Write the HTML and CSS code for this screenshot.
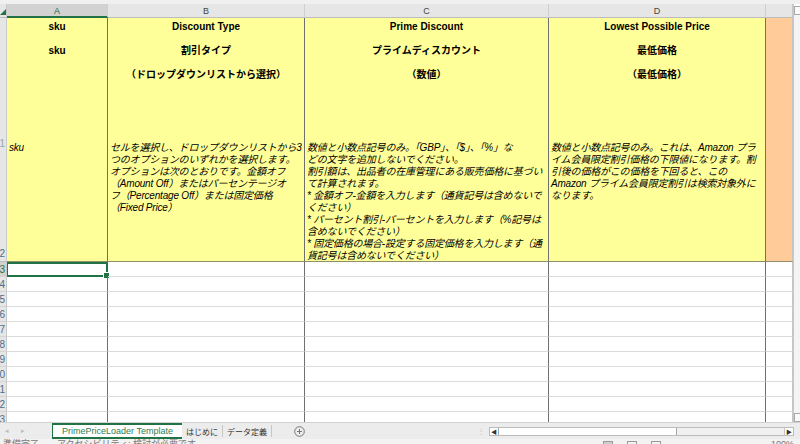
FILE: index.html
```html
<!DOCTYPE html>
<html lang="ja">
<head>
  <meta charset="UTF-8" />
  <title>PrimePriceLoader Template</title>
  <link rel="stylesheet" href="styles.css">
</head>
<body>
  <div class="app">
    <div class="topstrip"></div>

    <div class="main">
      <div class="grid">
        <!-- column headers -->
        <div class="corner"><span class="tri"></span></div>
        <div class="colhead sel">A</div>
        <div class="colhead">B</div>
        <div class="colhead">C</div>
        <div class="colhead">D</div>
        <div class="colhead last"></div>

        <!-- header row -->
        <div class="rowhead big">
          <span class="n1">1</span>
          <span class="n2">2</span>
        </div>
        <div class="cell yellow">
          <div class="head">sku<br><br>sku</div>
          <div class="desc">sku</div>
        </div>
        <div class="cell yellow">
          <div class="head">Discount Type<br><br>割引タイプ<br><br>（ドロップダウンリストから選択）</div>
          <div class="desc">セルを選択し、ドロップダウンリストから3<br>つのオプションのいずれかを選択します。<br>オプションは次のとおりです。金額オフ<br>（Amount Off）またはパーセンテージオ<br>フ（Percentage Off）または固定価格<br>（Fixed Price）</div>
        </div>
        <div class="cell yellow">
          <div class="head">Prime Discount<br><br>プライムディスカウント<br><br>（数値）</div>
          <div class="desc">数値と小数点記号のみ。「GBP」、「$」、「%」な<br>どの文字を追加しないでください。<br>割引額は、出品者の在庫管理にある販売価格に基づい<br>て計算されます。<br>* 金額オフ-金額を入力します（通貨記号は含めないで<br>ください）<br>* パーセント割引-パーセントを入力します（%記号は<br>含めないでください）<br>* 固定価格の場合-設定する固定価格を入力します（通<br>貨記号は含めないでください）</div>
        </div>
        <div class="cell yellow">
          <div class="head">Lowest Possible Price<br><br>最低価格<br><br>（最低価格）</div>
          <div class="desc">数値と小数点記号のみ。これは、Amazon プラ<br>イム会員限定割引価格の下限値になります。割<br>引後の価格がこの価格を下回ると、この<br>Amazon プライム会員限定割引は検索対象外に<br>なります。</div>
        </div>
        <div class="cell orange last"></div>

        <!-- empty rows -->
        <div class="rowhead cur">3</div>
        <div class="cell active"><span class="handle"></span></div>
        <div class="cell"></div><div class="cell"></div><div class="cell"></div><div class="cell last"></div>

        <div class="rowhead">4</div>
        <div class="cell"></div><div class="cell"></div><div class="cell"></div><div class="cell"></div><div class="cell last"></div>
        <div class="rowhead">5</div>
        <div class="cell"></div><div class="cell"></div><div class="cell"></div><div class="cell"></div><div class="cell last"></div>
        <div class="rowhead">6</div>
        <div class="cell"></div><div class="cell"></div><div class="cell"></div><div class="cell"></div><div class="cell last"></div>
        <div class="rowhead">7</div>
        <div class="cell"></div><div class="cell"></div><div class="cell"></div><div class="cell"></div><div class="cell last"></div>
        <div class="rowhead">8</div>
        <div class="cell"></div><div class="cell"></div><div class="cell"></div><div class="cell"></div><div class="cell last"></div>
        <div class="rowhead">9</div>
        <div class="cell"></div><div class="cell"></div><div class="cell"></div><div class="cell"></div><div class="cell last"></div>
        <div class="rowhead">10</div>
        <div class="cell"></div><div class="cell"></div><div class="cell"></div><div class="cell"></div><div class="cell last"></div>
        <div class="rowhead">11</div>
        <div class="cell"></div><div class="cell"></div><div class="cell"></div><div class="cell"></div><div class="cell last"></div>
        <div class="rowhead">12</div>
        <div class="cell"></div><div class="cell"></div><div class="cell"></div><div class="cell"></div><div class="cell last"></div>
        <div class="rowhead">13</div>
        <div class="cell"></div><div class="cell"></div><div class="cell"></div><div class="cell"></div><div class="cell last"></div>
      </div>

      <div class="vscroll">
        <div class="vbtn up"></div>
        <div class="vtrack"></div>
        <div class="vbtn down"></div>
      </div>
    </div>

    <div class="tabbar">
      <div class="nav"><span>&#9666;</span><span>&#9656;</span></div>
      <div class="tab active">PrimePriceLoader Template</div>
      <div class="tab">はじめに</div>
      <div class="tab">データ定義</div>
      <div class="addtab">
        <svg width="11" height="11" viewBox="0 0 11 11">
          <circle cx="5.5" cy="5.5" r="4.8" fill="none" stroke="#777" stroke-width="1"/>
          <path d="M5.5 3v5M3 5.5h5" stroke="#777" stroke-width="1"/>
        </svg>
      </div>
      <div class="spacer"></div>
      <div class="dots">&#8942;</div>
      <div class="hscroll">
        <div class="hbtn">&#9664;</div>
        <div class="thumb"></div>
        <div class="htrack"></div>
        <div class="hbtn">&#9654;</div>
      </div>
    </div>

    <div class="status">
      <span class="stext">準備完了　　アクセシビリティ: 検討が必要です</span>
      <div class="views">
        <span class="vicon on"></span>
        <span class="vicon"></span>
        <span class="vicon"></span>
      </div>
      <span class="zoomlbl">100%</span>
    </div>
  </div>
</body>
</html>
```

FILE: styles.css
```css
body {
  margin: 0;
  font-family: "Liberation Sans", "Noto Sans CJK JP", sans-serif;
  font-size: 10px;
  color: #000;
  background: #fff;
}

.app {
  width: 800px;
  height: 444px;
  display: flex;
  flex-direction: column;
  overflow: hidden;
}

.topstrip {
  height: 4px;
  background: #f0f0f0;
}

.main {
  height: 418px;
  display: flex;
}

.grid {
  width: 793px;
  display: grid;
  grid-template-columns: 7px 101px 197px 244px 217px 27px;
  grid-template-rows: 14px 244px repeat(11, 15px);
  overflow: hidden;
}

.grid > div {
  box-sizing: border-box;
}

.corner {
  background: #e6e6e6;
  border-right: 1px solid #c8c8c8;
  border-bottom: 1px solid #bdbdbd;
  position: relative;
}

.tri {
  position: absolute;
  left: 0;
  bottom: 2px;
  width: 0;
  height: 0;
  border-left: 6px solid transparent;
  border-bottom: 6px solid #217346;
}

.colhead {
  background: #e6e6e6;
  border-right: 1px solid #cfcfcf;
  border-bottom: 1px solid #bdbdbd;
  color: #444;
  font-size: 9px;
  text-align: center;
  line-height: 15px;
}

.colhead.sel {
  background: #d2d2d2;
  border-bottom: 2px solid #217346;
  color: #2f5d44;
}

.colhead.last {
  border-right: 1px solid #c8c8c8;
}

.rowhead {
  background: #e6e6e6;
  border-right: 1px solid #c8c8c8;
  border-bottom: 1px solid #d4d4d4;
  color: #4a6f8a;
  font-size: 10px;
  display: flex;
  justify-content: flex-end;
  align-items: center;
  overflow: hidden;
  white-space: nowrap;
  padding-right: 1px;
}

.rowhead.big {
  flex-direction: column;
  align-items: flex-end;
  justify-content: flex-start;
  border-bottom: 1px solid #bdbdbd;
}

.rowhead .n1 {
  margin-top: 120px;
  line-height: 12px;
  color: #8fa7b8;
}

.rowhead .n2 {
  margin-top: 98px;
  line-height: 12px;
}

.rowhead.cur {
  background: #d2d2d2;
  color: #217346;
}

.cell {
  border-right: 1px solid #6f6f6f;
  border-bottom: 1px solid #dcdcdc;
  position: relative;
}

.cell.last {
  border-right: 1px solid #c4c4c4;
}

.yellow {
  background: #ffff99;
  border-bottom: 1px solid #8f8f6a;
  overflow: hidden;
  white-space: nowrap;
}

.orange {
  background: #ffcc99;
  border-bottom: 1px solid #8f8f6a;
}

.head {
  height: 124px;
  padding-top: 3px;
  box-sizing: border-box;
  text-align: center;
  font-weight: bold;
  line-height: 12px;
}

.desc {
  font-style: italic;
  line-height: 12px;
  padding-left: 2px;
  letter-spacing: -0.2px;
}

.active {
  border: 2px solid #217346;
  border-left-width: 1px;
}

.handle {
  position: absolute;
  right: -4px;
  bottom: -4px;
  width: 5px;
  height: 5px;
  background: #217346;
  border: 1px solid #fff;
}

.vscroll {
  width: 7px;
  background: #fff;
  border-left: 1px solid #c8c8c8;
  box-sizing: border-box;
  display: flex;
  flex-direction: column;
}

.vbtn {
  height: 9px;
  border: 1px solid #a8a8a8;
  border-right: none;
  box-sizing: border-box;
  background: #fafafa;
}

.vbtn.up {
  margin-top: 2px;
}

.vtrack {
  flex: 1;
  background: #f4f4f4;
}

.tabbar {
  height: 17px;
  background: #ececec;
  border-top: 1px solid #d2d2d2;
  box-sizing: border-box;
  display: flex;
  align-items: stretch;
  font-size: 8px;
  color: #333;
}

.nav {
  width: 52px;
  box-sizing: border-box;
  display: flex;
  gap: 12px;
  padding-left: 5px;
  align-items: center;
  color: #bdbdbd;
  font-size: 7px;
}

.tab {
  padding: 0 4px;
  display: flex;
  align-items: center;
  border-right: 1px solid #c6c6c6;
  margin: 2px 0;
  white-space: nowrap;
}

.tab.active {
  margin: 0;
  width: 130px;
  justify-content: center;
  box-sizing: border-box;
  padding: 0;
  font-size: 9px;
  background: #fff;
  color: #2e8055;
  border-right: none;
  border-bottom: 2px solid #217346;
}

.addtab {
  width: 54px;
  display: flex;
  align-items: center;
  justify-content: center;
}

.spacer {
  flex: 1;
}

.dots {
  width: 12px;
  color: #c0c0c0;
  display: flex;
  align-items: center;
}

.hscroll {
  width: 303px;
  margin: 4px 6px 3px 0;
  display: flex;
  border: 1px solid #bcbcbc;
  background: #fff;
}

.hbtn {
  width: 8px;
  font-size: 6px;
  line-height: 8px;
  text-align: center;
  color: #333;
  background: #fff;
}

.thumb {
  width: 177px;
  border: 1px solid #a6a6a6;
  border-top: none;
  border-bottom: none;
  background: #fff;
}

.htrack {
  flex: 1;
  background: #f0f0f0;
  border-right: 1px solid #c4c4c4;
}

.status {
  height: 5px;
  background: #f3f3f3;
  display: flex;
  overflow: hidden;
  font-size: 9px;
  color: #777;
  line-height: 14px;
  position: relative;
}

.stext {
  padding-left: 3px;
  margin-top: -2px;
  width: 600px;
  white-space: nowrap;
}

.views {
  display: flex;
  gap: 14px;
  margin-top: 2px;
}

.vicon {
  width: 10px;
  height: 8px;
  border: 1px solid #999;
  box-sizing: border-box;
}

.vicon.on {
  background: #d0d0d0;
}

.zoomlbl {
  margin-left: auto;
  padding-right: 6px;
  margin-top: -2px;
}
```
